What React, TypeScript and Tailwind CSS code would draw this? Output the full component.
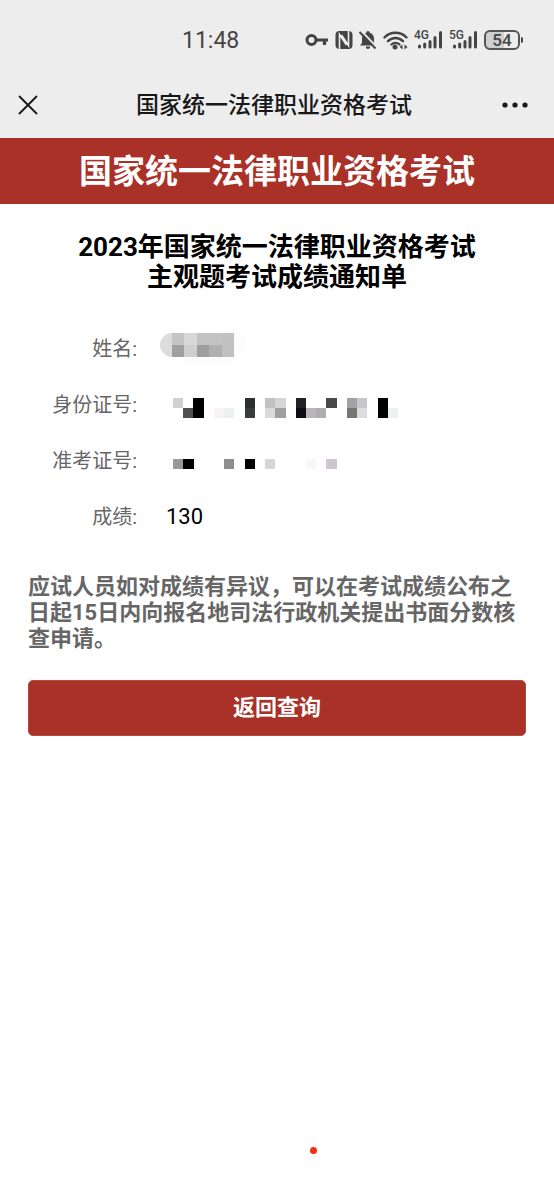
type Cell = [col: number, row: number, fill: string]

const NAME_CELLS: Cell[] = [
    [0, 0, '#c5c5c5'],
    [1, 0, '#d8d8d8'],
    [2, 0, '#c2c2c2'],
    [3, 0, '#c3c3c3'],
    [4, 0, '#c1c1c1'],
    [0, 1, '#a0a0a0'],
    [1, 1, '#cfcfcf'],
    [2, 1, '#9e9e9e'],
    [3, 1, '#b0b0b0'],
    [4, 1, '#c0c0c0'],
]

const ID_CELLS: Cell[] = [
    [0, 0, '#d0d0d0'],
    [1, 1, '#505050'],
    [2, 0, '#000000'],
    [2, 1, '#000000'],
    [4, 1, '#f8f3f5'],
    [5, 1, '#eef2ee'],
    [7, 0, '#2e302f'],
    [7, 1, '#3a3d3b'],
    [9, 0, '#bfc4bf'],
    [10, 0, '#d6d6d6'],
    [9, 1, '#dadada'],
    [10, 1, '#a0a0a0'],
    [12, 0, '#222222'],
    [12, 1, '#0e0d12'],
    [13, 1, '#b9b6ba'],
    [14, 1, '#b0adb1'],
    [15, 0, '#4a484b'],
    [17, 0, '#a2a2a2'],
    [18, 0, '#c8c6ca'],
    [17, 1, '#747674'],
    [18, 1, '#dcdcdc'],
    [20, 0, '#000000'],
    [20, 1, '#000000'],
    [21, 1, '#eef3ef'],
]

const TICKET_CELLS: Cell[] = [
    [0, 0, '#999999'],
    [1, 0, '#000000'],
    [5, 0, '#8e8e8e'],
    [7, 0, '#000000'],
    [9, 0, '#d6d6d6'],
    [13, 0, '#f8f8f8'],
    [15, 0, '#ccc8cd'],
]

function Cells({ cells }: { cells: Cell[] }) {
    return (
        <>
            {cells.map(([col, row, fill]) => (
                <rect key={`${col}-${row}`} x={col} y={row} width="1" height="1" fill={fill} />
            ))}
        </>
    )
}

function MaskedName() {
    return (
        <svg width="86" height="36" viewBox="0 0 86 36" aria-label="已隐藏">
            <rect x="58" y="0" width="28" height="24" rx="12" fill="#fcfcfc" />
            <rect x="24" y="16" width="52" height="18" rx="9" fill="#fbfbfb" />
            <path d="M13 2.500C5 3 0 9 0 15s5 12 13 12.300z" fill="#dcdcdc" />
            <g transform="translate(12 2.500) scale(12.400)" shapeRendering="crispEdges">
                <Cells cells={NAME_CELLS} />
            </g>
        </svg>
    )
}

function MaskedNumber({ cells, rows }: { cells: Cell[]; rows: 1 | 2 }) {
    return (
        <svg className="w-[225px]" viewBox={`0 0 22 ${rows}`} shapeRendering="crispEdges" aria-label="已隐藏">
            <Cells cells={cells} />
        </svg>
    )
}

function SignalIcon({ label }: { label: string }) {
    return (
        <div className="relative">
            <svg width="29" height="20" viewBox="0 0 29 20" fill="none" stroke="currentColor" strokeWidth="3" strokeLinecap="round">
                <path d="M5.500 16v1M10.700 14v3M16 11.500V17M21 7.500V17M26.500 2.500V17" />
            </svg>
            <span className="absolute left-0 -top-px text-[12px] leading-3 font-medium">{label}</span>
        </div>
    )
}

function StatusBar() {
    return (
        <div className="h-20 flex items-center justify-between pl-[182px] pr-[31px] text-[#444]">
            <span className="pt-0.5 text-[23px] leading-8">11:48</span>
            <div className="flex items-center gap-1.5">
                <svg width="24" height="20" viewBox="0 0 24 20" fill="none" stroke="currentColor">
                    <circle cx="6.500" cy="10" r="4.500" strokeWidth="3" />
                    <path d="M11 10h12M19.500 10v5" strokeWidth="3.200" />
                </svg>
                <svg width="18" height="20" viewBox="0 0 18 20">
                    <rect x="0.500" y="1" width="17" height="18" rx="4" fill="currentColor" />
                    <path
                        d="M4.500 19V4.500l7 10.500M13.500 1v14.500L6.500 5"
                        fill="none"
                        stroke="#ededed"
                        strokeWidth="1.600"
                    />
                </svg>
                <svg width="18" height="20" viewBox="0 0 18 20">
                    <path
                        d="M9 1c1 0 1.700.8 1.700 1.700C13.500 3.500 15 5.700 15 8.500V13l2 2.500H1L3 13V8.500C3 5.700 4.500 3.500 7.300 2.700 7.300 1.800 8 1 9 1zM6.800 16.500h4.400c0 1.400-.9 2.500-2.200 2.500s-2.200-1.100-2.200-2.500z"
                        fill="currentColor"
                    />
                    <path d="M2 .5l16 17" stroke="#ededed" strokeWidth="2" />
                    <path d="M.5 2l16 16.500" stroke="currentColor" strokeWidth="2" />
                </svg>
                <svg width="25" height="20" viewBox="0 0 25 20" fill="none" stroke="currentColor" strokeWidth="2.400" strokeLinecap="round">
                    <path d="M1.500 7.500c6-6.300 16-6.300 22 0M5 11.200c4.200-4.300 10.800-4.300 15 0M8.500 14.500c2.200-2.200 5.800-2.200 8 0" />
                    <circle cx="12" cy="17" r="2.500" fill="currentColor" stroke="none" />
                    <path d="M19.500 14.500v5L16.500 17zM21.500 14.500v5l3-2.500z" fill="currentColor" stroke="none" />
                </svg>
                <SignalIcon label="4G" />
                <SignalIcon label="5G" />
                <div className="flex items-center gap-px">
                    <span className="w-9 h-5 flex items-center justify-center rounded-[6px] border-2 border-[#555] bg-linear-to-r from-[#cfcfcf] from-55% to-[#ededed] to-55% text-[17px] leading-4 font-medium">
                        54
                    </span>
                    <span className="w-0.5 h-1.5 rounded-r-sm bg-[#444]" />
                </div>
            </div>
        </div>
    )
}

function NavBar() {
    return (
        <div className="h-[58px] pb-2 pl-[18px] pr-[26px] flex items-center justify-between text-[#181818]">
            <button type="button" aria-label="关闭" className="w-7 h-7 flex items-center">
                <svg width="20" height="20" viewBox="0 0 20 20" fill="none" stroke="currentColor" strokeWidth="1.800" strokeLinecap="round">
                    <path d="M1.500 1.500l17 17M18.500 1.500l-17 17" />
                </svg>
            </button>
            <p className="pt-px text-[23px] leading-8 font-medium">国家统一法律职业资格考试</p>
            <button type="button" aria-label="更多" className="w-[26px] h-7 flex items-center">
                <svg width="26" height="6" viewBox="0 0 26 6" fill="currentColor">
                    <circle cx="3" cy="3" r="2.600" />
                    <circle cx="13" cy="3" r="2.600" />
                    <circle cx="23" cy="3" r="2.600" />
                </svg>
            </button>
        </div>
    )
}

function Row({ label, children }: { label: string; children: React.ReactNode }) {
    return (
        <div className="h-14 flex items-center">
            <dt className="w-[109px] shrink-0 pt-0.5 text-right text-[20px] leading-7 text-[#666]">{label}:</dt>
            <dd className="flex items-center">{children}</dd>
        </div>
    )
}

export default function App() {
    return (
        <div className="min-h-screen flex flex-col bg-white font-[Roboto,'Noto_Sans_CJK_SC',sans-serif]">
            <div className="bg-[#ededed]">
                <StatusBar />
                <NavBar />
            </div>
            <header className="h-[66px] pt-0.5 flex items-center justify-center bg-[#a93127]">
                <p className="text-[33px] leading-10 font-bold text-white">国家统一法律职业资格考试</p>
            </header>
            <main className="px-7 pt-7">
                <h1 className="text-center text-[26px] leading-[30px] font-bold text-black">
                    2023年国家统一法律职业资格考试
                    <br />
                    主观题考试成绩通知单
                </h1>
                <dl className="mt-7">
                    <Row label="姓名">
                        <div className="pl-[23px]">
                            <MaskedName />
                        </div>
                    </Row>
                    <Row label="身份证号">
                        <div className="pl-9 pt-2">
                            <MaskedNumber cells={ID_CELLS} rows={2} />
                        </div>
                    </Row>
                    <Row label="准考证号">
                        <div className="pl-9 pt-2">
                            <MaskedNumber cells={TICKET_CELLS} rows={1} />
                        </div>
                    </Row>
                    <Row label="成绩">
                        <span className="pl-[29px] pt-0.5 text-[22px] leading-7 text-black">130</span>
                    </Row>
                </dl>
                <p className="mt-[30px] text-[22px] leading-[26px] font-bold text-[#666]">
                    应试人员如对成绩有异议，可以在考试成绩公布之日起15日内向报名地司法行政机关提出书面分数核查申请。
                </p>
                <button
                    type="button"
                    className="mt-7 w-full h-14 rounded-[5px] border border-[#b5493f] bg-[#a93127] text-[22px] leading-8 font-bold text-white"
                >
                    返回查询
                </button>
            </main>
            <footer className="mt-auto pt-8 pb-[46px] pl-[72px] flex justify-center">
                <span className="w-[7px] h-[7px] rounded-full bg-[#f5300a]" />
            </footer>
        </div>
    )
}
